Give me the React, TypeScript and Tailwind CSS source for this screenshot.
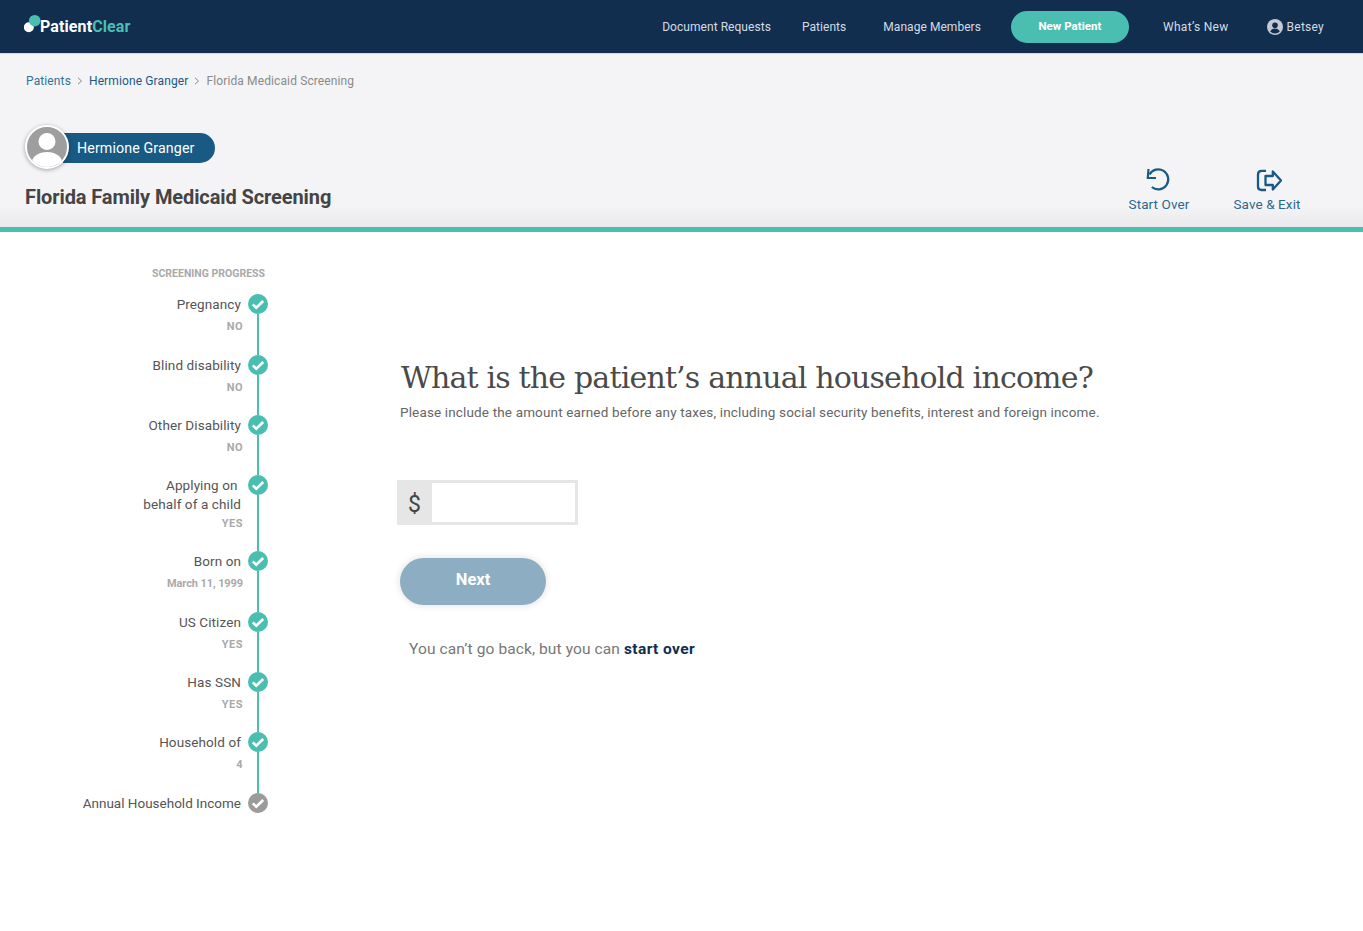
import React from "react";

const sans = "font-['Roboto','Noto_Sans',sans-serif]";

function Check({ grey }: { grey?: boolean }) {
  return (
    <svg width="20" height="20" viewBox="0 0 20 20" className="shrink-0">
      <circle cx="10" cy="10" r="10" fill={grey ? "#9b9b9b" : "#4abfb1"} />
      <path d="M4.8 10.4l3.5 3.4 6.9-6.8" fill="none" stroke="#fff" strokeWidth="2.6" />
    </svg>
  );
}

const steps = [
  { l: ["Pregnancy"], v: "NO", h: "h-[61px]" },
  { l: ["Blind disability"], v: "NO", h: "h-[60px]" },
  { l: ["Other Disability"], v: "NO", h: "h-[60px]" },
  { l: ["Applying on\u00a0", "behalf of a child"], v: "YES", h: "h-[76px]" },
  { l: ["Born on"], v: "March 11, 1999", h: "h-[61px]" },
  { l: ["US Citizen"], v: "YES", h: "h-[60px]" },
  { l: ["Has SSN"], v: "YES", h: "h-[60px]" },
  { l: ["Household of"], v: "4", h: "h-[61px]" },
];

function Step({ l, v, h }: { l: string[]; v: string; h: string }) {
  const multi = l.length > 1;
  return (
    <div className={`flex ${h}`}>
      <div className="w-[173px] text-right">
        <div className={`text-[13.5px] tracking-[0.1px] text-[#555] ${multi ? "pt-[1px] leading-[19px]" : "leading-[21px]"}`}>
          {l.map((t) => (
            <div key={t} className="whitespace-pre">{t}</div>
          ))}
        </div>
        <div className={`mr-[-2px] text-[11px] leading-[16px] font-bold text-[#a9a9a9] ${multi ? "mt-[2px]" : "mt-[4px]"} ${v.length > 3 ? "tracking-[-0.1px]" : "tracking-[0.5px]"}`}>
          {v}
        </div>
      </div>
      <div className="ml-[7px] flex w-[20px] flex-col items-center">
        <Check />
        <div className="w-[2px] flex-1 bg-[#4abfb1]" />
      </div>
    </div>
  );
}

export default function App() {
  return (
    <div className={`min-h-[931px] bg-white ${sans}`}>
      <header className="flex h-[53px] items-center bg-[#112e4f] pl-[24px] text-[12px] tracking-[0.05px] text-[#d5dbe2]">
        <div className="flex items-center">
          <svg width="17" height="20" viewBox="0 0 17 20" className="mt-[-7px]">
            <circle cx="4.8" cy="14.3" r="5" fill="#fff" />
            <circle cx="10.7" cy="7.7" r="5.8" fill="#4abfb1" />
          </svg>
          <span className="ml-[-1px] text-[16px] font-bold tracking-[0.1px] text-white">
            Patient<span className="text-[#4abfb1]">Clear</span>
          </span>
        </div>
        <nav className="ml-auto flex items-center pr-[39px]">
          <span>Document Requests</span>
          <span className="ml-[31px]">Patients</span>
          <span className="ml-[37px]">Manage Members</span>
          <span className="ml-[30px] flex h-[32px] w-[118px] items-center justify-center rounded-full bg-[#4abfb1] text-[11.5px] font-bold text-white">
            New Patient
          </span>
          <span className="ml-[34px] tracking-[0.3px]">What’s New</span>
          <svg width="16" height="16" viewBox="0 0 16 16" className="ml-[38px]">
            <circle cx="8" cy="8" r="8" fill="#c3cad3" />
            <circle cx="8" cy="6.2" r="2.8" fill="#112e4f" />
            <path d="M3.2 12.6c.8-2 2.6-3 4.8-3s4 1 4.8 3A6.6 6.6 0 0 1 8 14.6a6.6 6.6 0 0 1-4.8-2z" fill="#112e4f" />
          </svg>
          <span className="ml-[4px] tracking-[0.25px]">Betsey</span>
        </nav>
      </header>

      <section className="flex h-[174px] flex-col border-t border-[#d5d7dc] bg-gradient-to-b from-[#f4f4f7] from-[88%] to-[#e9e9eb] pl-[25px]">
        <div className="mt-[18px] flex h-[18px] items-center pl-[1px] text-[12px] tracking-[0.12px] text-[#8a8a8a]">
          <span className="text-[#2f7396]">Patients</span>
          <svg width="6" height="8" viewBox="0 0 6 8" className="mx-[6px]"><path d="M1 .8L4.5 4 1 7.2" fill="none" stroke="#888" /></svg>
          <span className="text-[#195a85]">Hermione Granger</span>
          <svg width="6" height="8" viewBox="0 0 6 8" className="mx-[6px]"><path d="M1 .8L4.5 4 1 7.2" fill="none" stroke="#888" /></svg>
          <span>Florida Medicaid Screening</span>
        </div>
        <div className="mt-[35px] flex h-[44px] items-center">
          <div className="relative z-10 h-[44px] w-[44px] overflow-hidden rounded-full border-[2px] border-white bg-[#9e9e9e] shadow-[0_1px_4px_rgba(0,0,0,0.35)]">
            <svg viewBox="0 0 40 40" className="h-full w-full">
              <circle cx="20" cy="14.5" r="8.5" fill="#fff" />
              <ellipse cx="20" cy="35" rx="15" ry="10" fill="#fff" />
            </svg>
          </div>
          <div className="mt-[2px] ml-[-6px] flex h-[30px] w-[152px] items-center rounded-r-full bg-[#195a85] pt-[1px] pl-[14px] text-[14.25px] tracking-[0.1px] text-white">
            Hermione Granger
          </div>
        </div>
        <div className="flex flex-1 items-start justify-between pr-[62px]">
          <h1 className="mt-[14px] text-[20px] leading-[28px] font-bold tracking-[-0.1px] text-[#444]">
            Florida Family Medicaid Screening
          </h1>
          <div className="mt-[-3px] flex text-[13.5px] leading-[18px] tracking-[0.1px] text-[#2b6a90]">
            <div className="flex w-[62px] flex-col items-center">
              <svg width="26" height="26" viewBox="0 0 26 26" fill="none" stroke="#195a85" strokeWidth="2.2" className="ml-[-3px]">
                <path d="M4.5 8.5A10 10 0 1 1 6.8 21" />
                <path d="M3.5 3L2.8 12H11" />
              </svg>
              <span className="mt-[3px] whitespace-nowrap">Start Over</span>
            </div>
            <div className="ml-[43px] flex w-[68px] flex-col items-center">
              <svg width="26" height="26" viewBox="0 0 26 26" fill="none" stroke="#195a85" strokeWidth="2.3" className="ml-[3px]">
                <path d="M10 4.8H5.5Q2 4.8 2 8.5V20.5Q2 24 5.5 24H10" />
                <path d="M9.5 10h7.3V5.5L25 14.5l-8.2 9V19H9.5z" strokeLinejoin="round" />
              </svg>
              <span className="mt-[3px] whitespace-nowrap">Save &amp; Exit</span>
            </div>
          </div>
        </div>
      </section>
      <div className="h-[5px] bg-[#4abfb1]" />

      <main className="flex">
        <aside className="ml-[68px] w-[200px] pt-[34px]">
          <div className="mr-[3px] pb-[12px] text-right text-[10.5px] leading-[16px] font-bold text-[#a9a9a9]">
            SCREENING PROGRESS
          </div>
          {steps.map((s) => (
            <Step key={s.l[0]} {...s} />
          ))}
          <div className="flex">
            <div className="w-[173px] text-right text-[13.5px] leading-[21px] whitespace-nowrap text-[#555]">
              Annual Household Income
            </div>
            <div className="ml-[7px]"><Check grey /></div>
          </div>
        </aside>

        <div className="ml-[129px] pt-[125px]">
          <h2 className="ml-[4px] font-['DejaVu_Serif',serif] text-[30px] leading-[42px] tracking-[-0.82px] whitespace-nowrap text-[#4a4a4a]">
            What is the patient’s annual household income?
          </h2>
          <p className="mt-[3px] ml-[3px] text-[13.5px] leading-[20px] tracking-[0.15px] whitespace-nowrap text-[#666]">
            Please include the amount earned before any taxes, including social security benefits, interest and foreign income.
          </p>
          <div className="mt-[58px] flex h-[45px] w-[181px] border-[3px] border-[#e6e6e6]">
            <div className="flex w-[32px] items-center justify-center bg-[#e6e6e6] pt-[6px] pr-[3px] text-[23px] text-[#444]">$</div>
          </div>
          <button className="mt-[33px] ml-[3px] flex h-[47px] w-[146px] items-center justify-center rounded-full bg-[#8dadc2] pb-[3px] text-[16.5px] font-bold text-white shadow-[0_0_5px_3px_#f0f0f0]">
            Next
          </button>
          <p className="mt-[33px] ml-[12px] text-[15.5px] leading-[22px] tracking-[0.11px] whitespace-nowrap text-[#777]">
            You can’t go back, but you can <span className="font-bold tracking-[0.4px] text-[#112e4f]">start over</span>
          </p>
        </div>
      </main>
    </div>
  );
}
